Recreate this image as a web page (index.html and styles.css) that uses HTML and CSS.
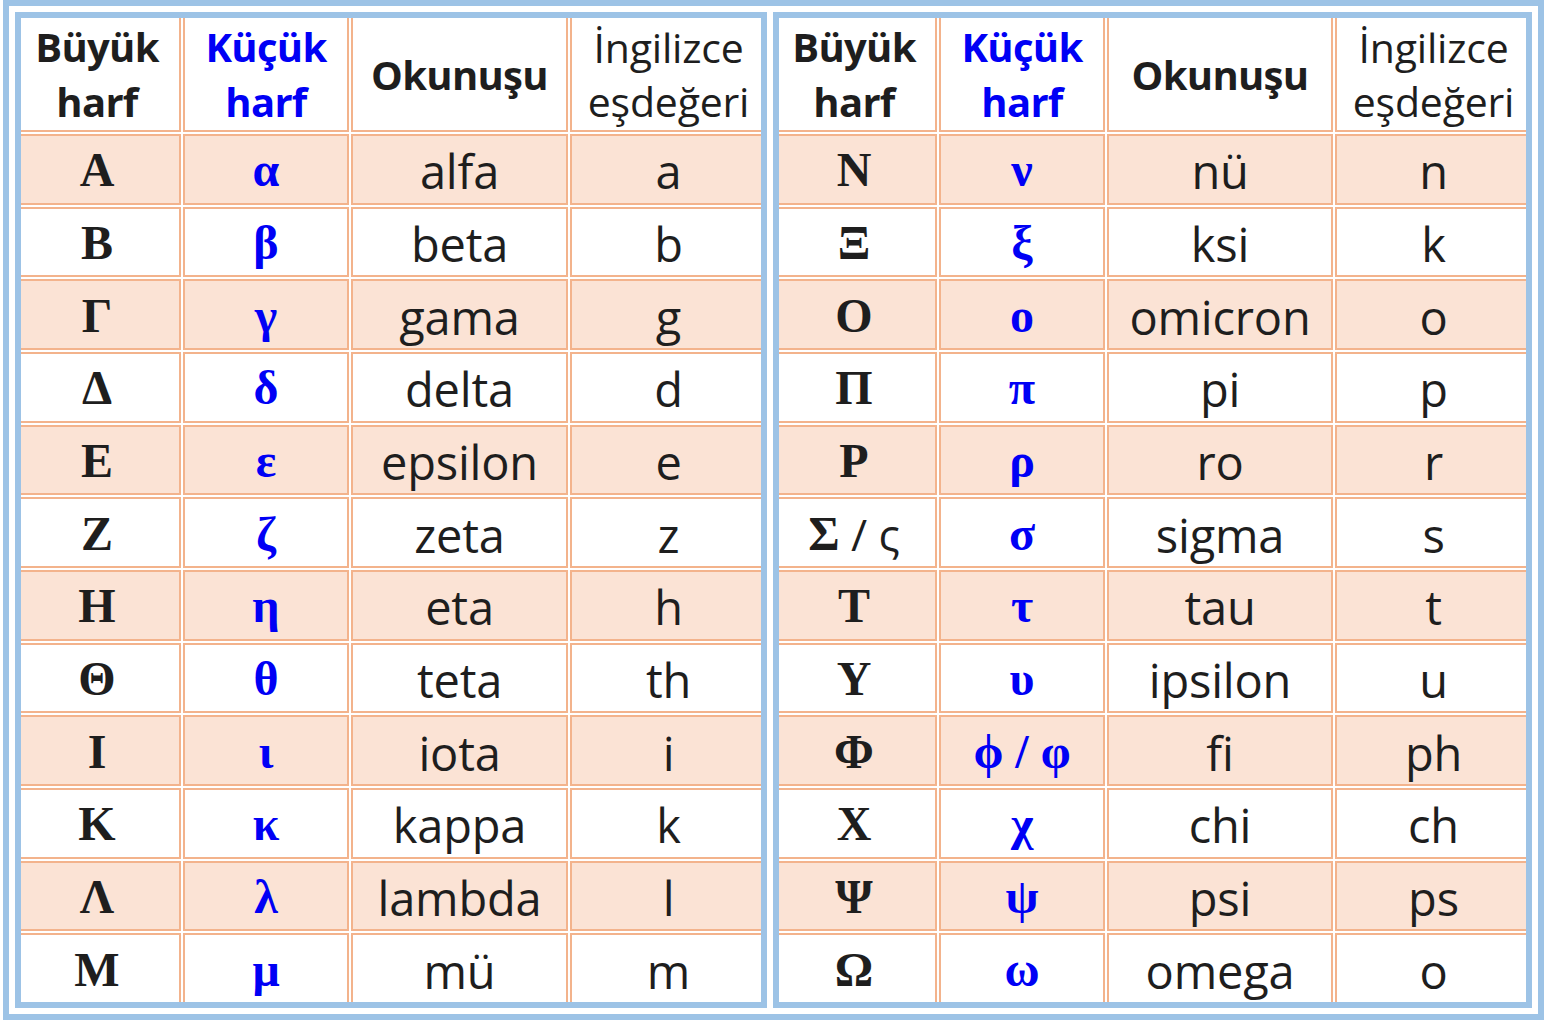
FILE: index.html
```html
<!DOCTYPE html>
<html lang="tr">
<head>
<meta charset="utf-8">
<title>Yunan alfabesi</title>
<link rel="stylesheet" href="styles.css">
</head>
<body>
<div class="frame">
  <div class="tbl left">
    <div class="grid">
      <div class="c h c1">Büyük<br>harf</div>
      <div class="c h blue">Küçük<br>harf</div>
      <div class="c h">Okunuşu</div>
      <div class="c hn c4">İngilizce<br>eşdeğeri</div>

      <div class="c p g c1">Α</div><div class="c p g blue">α</div><div class="c p t">alfa</div><div class="c p t c4">a</div>
      <div class="c g c1">Β</div><div class="c g blue">β</div><div class="c t">beta</div><div class="c t c4">b</div>
      <div class="c p g c1">Γ</div><div class="c p g blue">γ</div><div class="c p t">gama</div><div class="c p t c4">g</div>
      <div class="c g c1">Δ</div><div class="c g blue">δ</div><div class="c t">delta</div><div class="c t c4">d</div>
      <div class="c p g c1">Ε</div><div class="c p g blue">ε</div><div class="c p t">epsilon</div><div class="c p t c4">e</div>
      <div class="c g c1">Ζ</div><div class="c g blue">ζ</div><div class="c t">zeta</div><div class="c t c4">z</div>
      <div class="c p g c1">Η</div><div class="c p g blue">η</div><div class="c p t">eta</div><div class="c p t c4">h</div>
      <div class="c g c1">Θ</div><div class="c g blue">θ</div><div class="c t">teta</div><div class="c t c4">th</div>
      <div class="c p g c1">Ι</div><div class="c p g blue">ι</div><div class="c p t">iota</div><div class="c p t c4">i</div>
      <div class="c g c1">Κ</div><div class="c g blue">κ</div><div class="c t">kappa</div><div class="c t c4">k</div>
      <div class="c p g c1">Λ</div><div class="c p g blue">λ</div><div class="c p t">lambda</div><div class="c p t c4">l</div>
      <div class="c g c1">Μ</div><div class="c g blue">μ</div><div class="c t">mü</div><div class="c t c4">m</div>
    </div>
  </div>
  <div class="tbl right">
    <div class="grid">
      <div class="c h c1">Büyük<br>harf</div>
      <div class="c h blue">Küçük<br>harf</div>
      <div class="c h">Okunuşu</div>
      <div class="c hn c4">İngilizce<br>eşdeğeri</div>

      <div class="c p g c1">Ν</div><div class="c p g blue">ν</div><div class="c p t">nü</div><div class="c p t c4">n</div>
      <div class="c g c1">Ξ</div><div class="c g blue">ξ</div><div class="c t">ksi</div><div class="c t c4">k</div>
      <div class="c p g c1">Ο</div><div class="c p g blue">ο</div><div class="c p t">omicron</div><div class="c p t c4">o</div>
      <div class="c g c1">Π</div><div class="c g blue">π</div><div class="c t">pi</div><div class="c t c4">p</div>
      <div class="c p g c1">Ρ</div><div class="c p g blue">ρ</div><div class="c p t">ro</div><div class="c p t c4">r</div>
      <div class="c g c1">Σ<span class="sl">&nbsp;/ ς</span></div><div class="c g blue">σ</div><div class="c t">sigma</div><div class="c t c4">s</div>
      <div class="c p g c1">Τ</div><div class="c p g blue">τ</div><div class="c p t">tau</div><div class="c p t c4">t</div>
      <div class="c g c1">Υ</div><div class="c g blue">υ</div><div class="c t">ipsilon</div><div class="c t c4">u</div>
      <div class="c p g c1">Φ</div><div class="c p g blue">ϕ / φ</div><div class="c p t">fi</div><div class="c p t c4">ph</div>
      <div class="c g c1">Χ</div><div class="c g blue">χ</div><div class="c t">chi</div><div class="c t c4">ch</div>
      <div class="c p g c1">Ψ</div><div class="c p g blue">ψ</div><div class="c p t">psi</div><div class="c p t c4">ps</div>
      <div class="c g c1">Ω</div><div class="c g blue">ω</div><div class="c t">omega</div><div class="c t c4">o</div>
    </div>
  </div>
</div>
</body>
</html>
```
FILE: styles.css
```css
html, body {
  margin: 0;
  padding: 0;
  background: #ffffff;
}

.frame {
  margin-left: 3px;
  width: 1541px;
  height: 1020px;
  box-sizing: border-box;
  border: 6px solid #9dc3e6;
  padding: 6px;
  display: flex;
  gap: 6px;
}

.tbl {
  box-sizing: border-box;
  border: 6px solid #9dc3e6;
  overflow: hidden;
  background: #ffffff;
}

.left { width: 752px; }
.right { width: 759px; }

.grid {
  margin: -2px;
  height: calc(100% + 4px);
  display: grid;
  gap: 2px;
  grid-template-rows: 116px repeat(12, minmax(0, 1fr));
}

.left .grid { grid-template-columns: 162px 166px 217px 193px; }
.right .grid { grid-template-columns: 160px 166px 226px 193px; }

.c {
  border: 2px solid #f3b38c;
  background: #ffffff;
  display: flex;
  align-items: center;
  justify-content: center;
  text-align: center;
  color: #1e1e1e;
  min-width: 0;
  min-height: 0;
  white-space: nowrap;
}

.c1 { padding-right: 6px; }
.c4 { padding-left: 4px; }

.p { background: #fbe3d5; }

.h {
  font-family: "Open Sans", "Noto Sans", sans-serif;
  font-weight: 700;
  font-size: 40px;
  line-height: 55px;
  letter-spacing: -0.7px;
}

.hn {
  font-family: "Open Sans", "Noto Sans", sans-serif;
  font-weight: 400;
  font-size: 41px;
  line-height: 54px;
  letter-spacing: -0.2px;
}

.g {
  font-family: "Liberation Serif", "DejaVu Serif", serif;
  font-weight: 700;
  font-size: 48px;
  line-height: 56px;
  padding-top: 2px;
}

.t {
  font-family: "Open Sans", "Noto Sans", sans-serif;
  font-weight: 400;
  font-size: 47px;
  line-height: 60px;
  padding-top: 4px;
  letter-spacing: -0.2px;
}

.sl {
  font-family: "Open Sans", "Noto Sans", sans-serif;
  font-weight: 400;
  font-size: 44px;
}

.blue { color: #0000f5; }
```
